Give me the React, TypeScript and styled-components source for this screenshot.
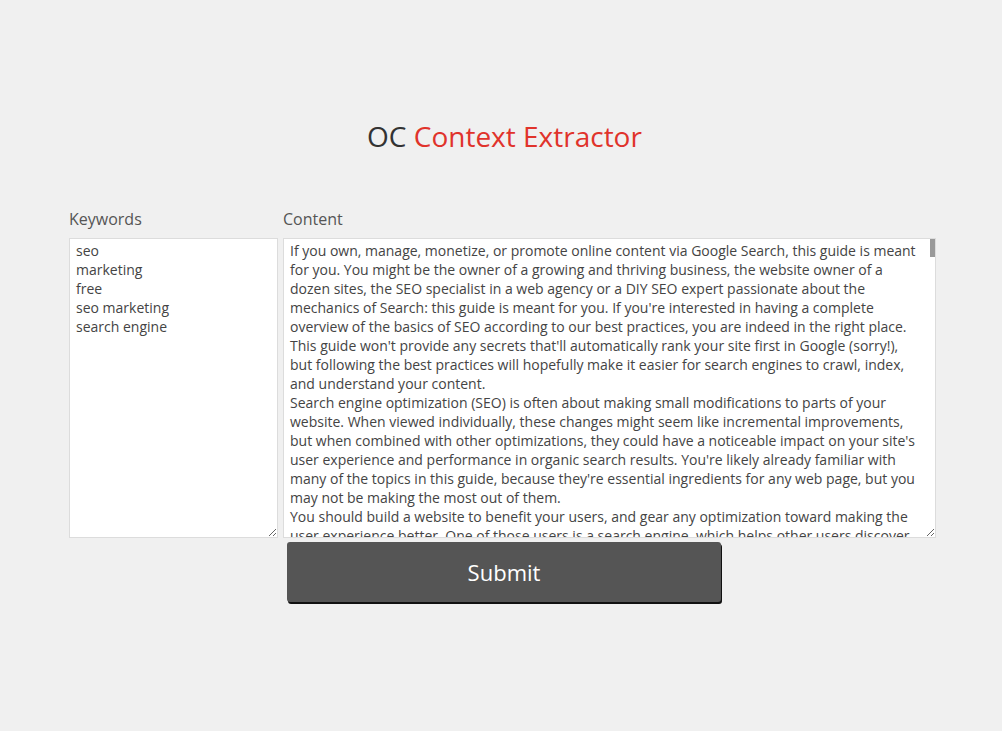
import React from "react";
import styled, { createGlobalStyle } from "styled-components";

const GlobalStyle = createGlobalStyle`
  html, body {
    margin: 0;
    padding: 0;
    background: #f0f0f0;
    font-family: "Open Sans", "Liberation Sans", sans-serif;
  }
`;

const Page = styled.div`
  min-height: 731px;
  padding: 117px 66px 0 69px;
  box-sizing: border-box;
  display: flex;
  flex-direction: column;
`;

const Title = styled.h1`
  margin: 0 0 53px 4px;
  font-size: 28px;
  font-weight: 400;
  line-height: 38px;
  text-align: center;
  color: #333;
`;

const Accent = styled.span`
  color: #e0332b;
`;

const Fields = styled.div`
  display: grid;
  grid-template-columns: 209px 653px;
  column-gap: 5px;
`;

const Field = styled.div`
  display: flex;
  flex-direction: column;
`;

const Label = styled.label`
  font-size: 16px;
  line-height: 22px;
  color: #555;
  margin-bottom: 8px;
`;

const BoxWrap = styled.div`
  position: relative;
  height: 300px;
`;

const TextBox = styled.textarea<{ $scroll?: boolean }>`
  display: block;
  box-sizing: border-box;
  height: 300px;
  width: 100%;
  margin: 0;
  padding: 2px ${(p) => (p.$scroll ? "12px" : "6px")} 3px 6px;
  border: 1px solid #dcdcdc;
  background: #fff;
  font-family: "Open Sans", "Liberation Sans", sans-serif;
  font-size: 14px;
  line-height: 19px;
  color: #444;
  outline: none;
  resize: both;

  &::-webkit-scrollbar {
    width: 6px;
  }
  &::-webkit-scrollbar-track {
    background: #fff;
  }
  &::-webkit-scrollbar-thumb {
    background: #999;
  }
`;

const ScrollThumb = styled.div`
  position: absolute;
  top: 1px;
  right: 1px;
  width: 5px;
  height: 18px;
  background: #999;
  pointer-events: none;
`;

const Actions = styled.div`
  display: flex;
  justify-content: center;
  padding-left: 3px;
  margin-top: 4px;
`;

const SubmitButton = styled.button`
  width: 434px;
  height: 60px;
  border: none;
  border-radius: 3px;
  background: #555;
  color: #fff;
  font-family: "Open Sans", "Liberation Sans", sans-serif;
  font-size: 22px;
  box-shadow: 1px 2px 0 #111;
  cursor: pointer;
`;

const keywords = `seo
marketing
free
seo marketing
search engine`;

const p1 =
  "If you own, manage, monetize, or promote online content via Google Search, this guide is meant for you. You might be the owner of a growing and thriving business, the website owner of a dozen sites, the SEO specialist in a web agency or a DIY SEO expert passionate about the mechanics of Search: this guide is meant for you. If you're interested in having a complete overview of the basics of SEO according to our best practices, you are indeed in the right place. This guide won't provide any secrets that'll automatically rank your site first in Google (sorry!), but following the best practices will hopefully make it easier for search engines to crawl, index, and understand your content.";
const p2 =
  "Search engine optimization (SEO) is often about making small modifications to parts of your website. When viewed individually, these changes might seem like incremental improvements, but when combined with other optimizations, they could have a noticeable impact on your site's user experience and performance in organic search results. You're likely already familiar with many of the topics in this guide, because they're essential ingredients for any web page, but you may not be making the most out of them.";
const p3 =
  "You should build a website to benefit your users, and gear any optimization toward making the user experience better. One of those users is a search engine, which helps other users discover your content. Search engine optimization is about helping search engines understand and present content. Your site may be smaller or larger than our example site and offer vastly different content, but the optimization topics in this guide apply to sites of all sizes and types. We hope our guide gives you some fresh ideas on how to improve your website, and we'd love to hear your questions, feedback, and success stories in the Google Search Central Help Community.";
const p4 =
  "The first step to getting your site on Google is to be sure that Google can find it. The best way to do that is to submit a sitemap. A sitemap is a file on your site that tells search engines about new or changed pages on your site. Google also finds pages through links from other pages. A robots.txt file tells search engines whether they can access and therefore crawl parts of your site. This file, which must be named robots.txt, is placed in the root directory of your site. It is possible that pages blocked by robots.txt can still be crawled, so for sensitive pages, use a more secure method.";
const p5 =
  "When Googlebot crawls a page, it should see the page the same way an average user does. For optimal rendering and indexing, always allow Google access to the JavaScript, CSS, and image files used by your website. If your site's robots.txt file disallows crawling of these assets, it directly harms how well our algorithms render and index your content. This can result in suboptimal rankings.";
const p6 =
  "A title tag tells both users and search engines what the topic of a particular page is. Place the title element within the head element of the HTML document. You should create unique titles for each page on your site. Accurately describe the page's content, choose a title that reads naturally and effectively communicates the topic of the page's content, and avoid choosing a title that has no relation to the content on the page.";

const content = [p1, p2, p3, p4, p5, p6, p1, p2, p3, p4, p5, p6, p1, p2, p3, p4, p5, p6].join("\n");

export default function App() {
  return (
    <>
      <GlobalStyle />
      <Page>
        <Title>
          OC <Accent>Context Extractor</Accent>
        </Title>
        <Fields>
          <Field>
            <Label htmlFor="keywords">Keywords</Label>
            <BoxWrap>
              <TextBox id="keywords" defaultValue={keywords} />
            </BoxWrap>
          </Field>
          <Field>
            <Label htmlFor="content">Content</Label>
            <BoxWrap>
              <TextBox id="content" $scroll defaultValue={content} />
              <ScrollThumb />
            </BoxWrap>
          </Field>
        </Fields>
        <Actions>
          <SubmitButton type="button">Submit</SubmitButton>
        </Actions>
      </Page>
    </>
  );
}
